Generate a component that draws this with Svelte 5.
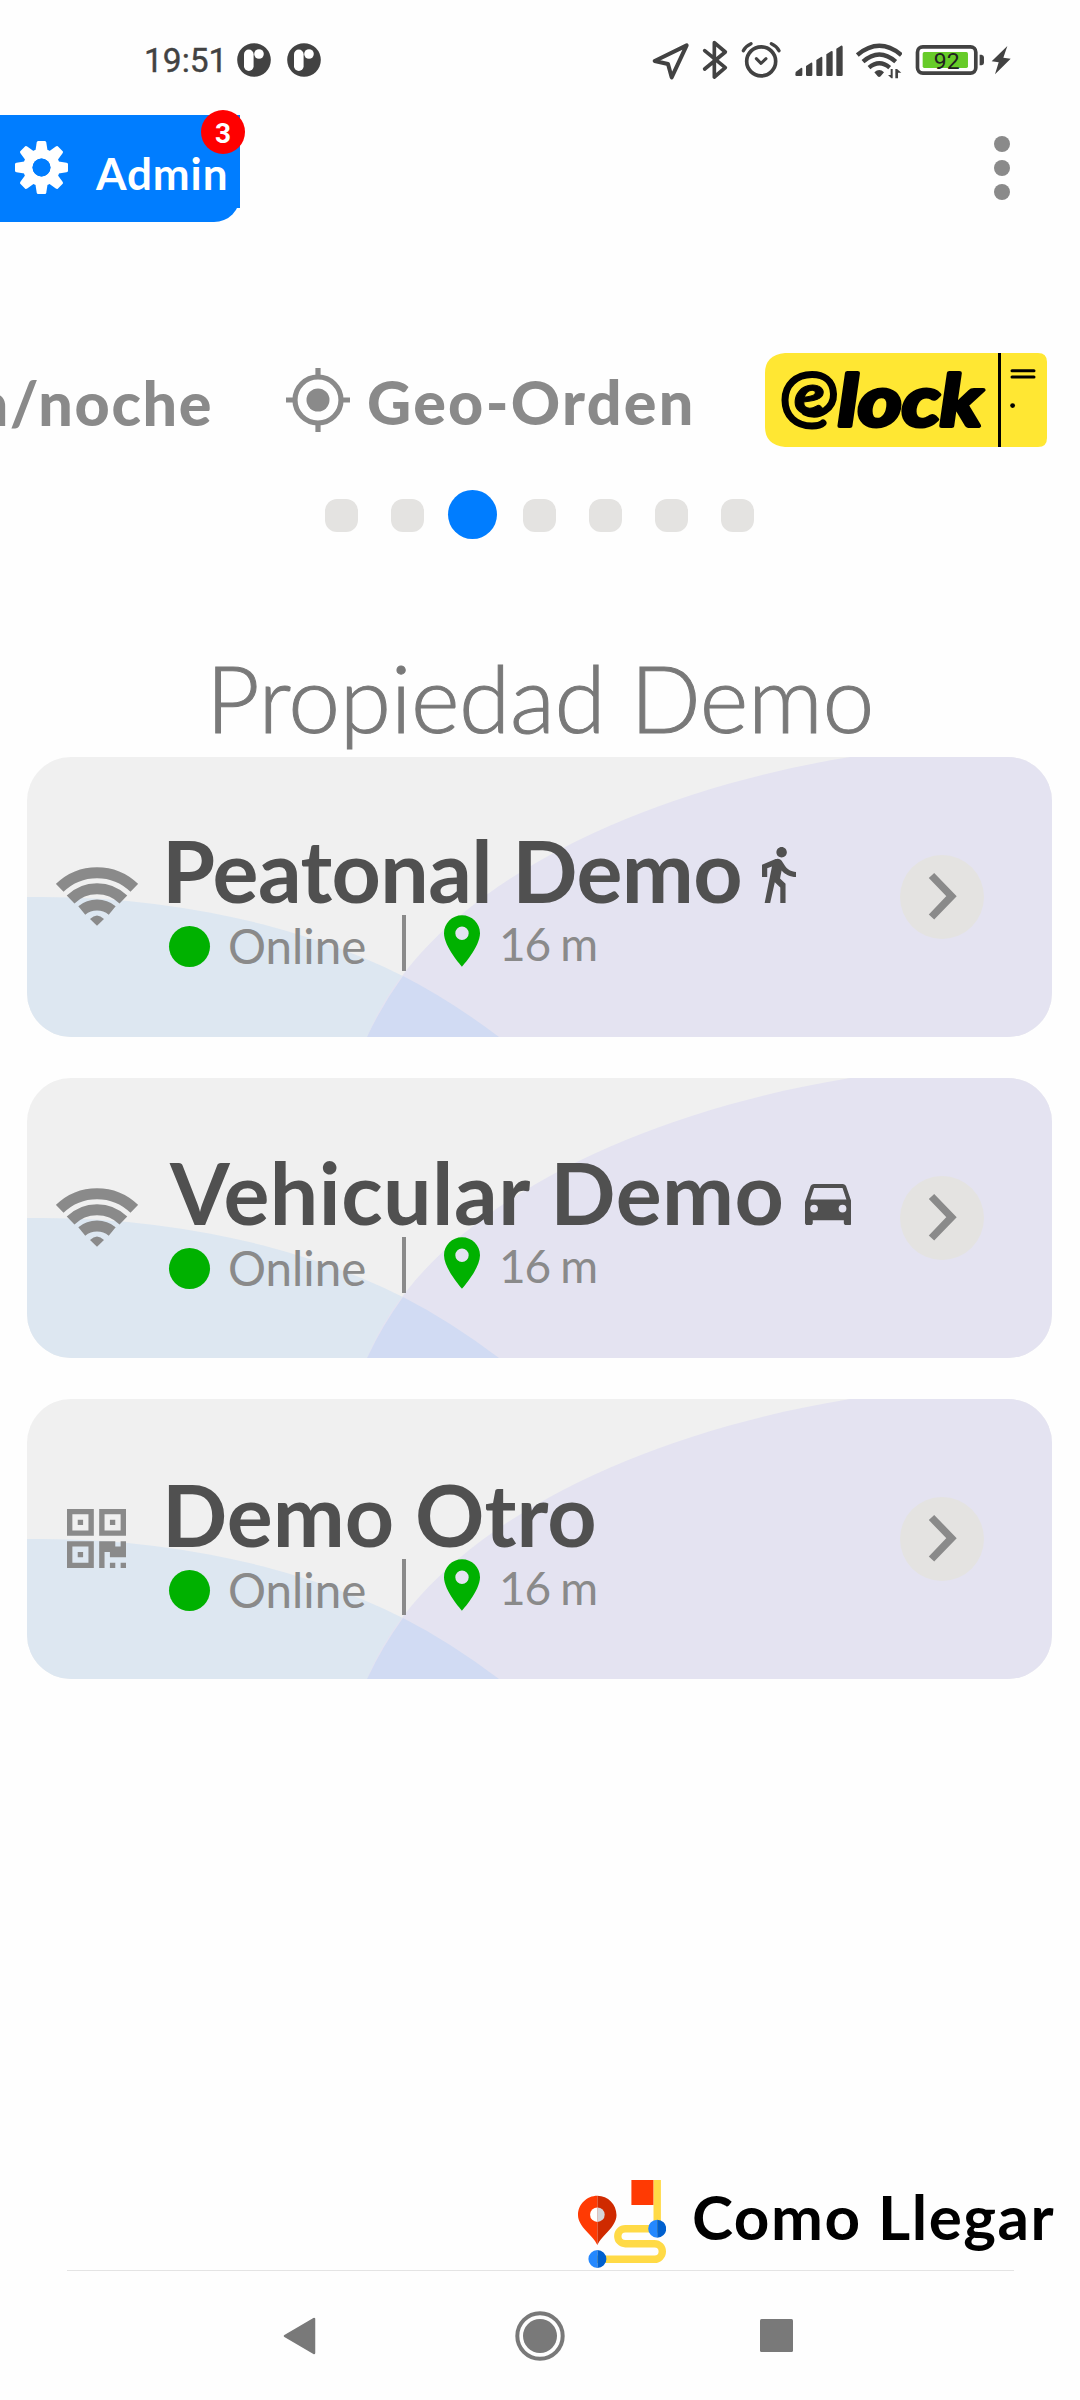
<script>
  let badge = 3
  let active = 2
  let pages = [0, 1, 2, 3, 4, 5, 6]

  let accesses = [
    {name: "Peatonal Demo", link: "wifi", kind: "walk", state: "Online", distance: "16 m"},
    {name: "Vehicular Demo", link: "wifi", kind: "car", state: "Online", distance: "16 m"},
    {name: "Demo Otro", link: "qr", kind: "", state: "Online", distance: "16 m"}
  ]
</script>

<div class="screen">
  <!-- STATUS BAR -->
  <div class="status">
    <span class="clock">19:51</span>
    {#each [0, 1] as n}
    <svg class="app-ico" viewBox="0 0 34 34">
      <circle cx="17" cy="17" r="16.8" fill="#424242"/>
      <rect x="7" y="6.5" width="9.6" height="21.5" rx="4.8" fill="#fff"/>
      <circle cx="22" cy="11" r="4.8" fill="#fff"/>
    </svg>
    {/each}
    <div class="sys">
      <svg width="38" height="40" viewBox="156 60 114 120">
        <path d="M164 123L260 76L215 172L204 132Z" fill="none" stroke="#424242" stroke-width="12" stroke-linejoin="round"/>
      </svg>
      <svg width="26" height="40" viewBox="306 60 78 120">
        <path d="M314 92L376 143L343 171V68L376 96L314 147" fill="none" stroke="#424242" stroke-width="11" stroke-linejoin="round" stroke-linecap="round"/>
      </svg>
      <svg width="40.7" height="40" viewBox="424 60 122 120">
        <g fill="none" stroke="#424242" stroke-linecap="round">
          <circle cx="484.500" cy="124" r="43.500" stroke-width="11"/>
          <path d="M470 116L484 130L499 116" stroke-width="9" stroke-linejoin="round"/>
          <path d="M431 92Q438 78 454 71M538 92Q531 78 515 71" stroke-width="10"/>
        </g>
      </svg>
      <svg width="48" height="40" viewBox="582 60 144 120">
        <path d="M584 156L600 144Q604 142 604 147V164Q604 168 600 168H587Q583 168 583 164ZM615 138L630 128Q634 126 634 131V164Q634 168 630 168H619Q615 168 615 164ZM646 120L660 111Q664 109 664 114V164Q664 168 660 168H650Q646 168 646 164ZM676 103L690 94Q695 91 695 97V164Q695 168 691 168H680Q676 168 676 164ZM706 86L720 77Q725 75 725 81V164Q725 168 721 168H710Q706 168 706 164Z" fill="#424242"/>
      </svg>
      <svg width="46.7" height="40" viewBox="764 60 140 120">
        <g fill="none" stroke="#424242" stroke-width="13">
          <path d="M768 105Q834 50 900 105"/>
          <path d="M785 125Q834 82 883 125"/>
          <path d="M803 143Q834 117 865 143"/>
        </g>
        <path d="M819 157Q834 143 848 157L838 169Q833 173 829 169ZM868 147H874V175H870L860 165H868ZM882 175V147H887L900 158H890V175Z" fill="#424242"/>
      </svg>
      <svg class="battery" width="69.300" height="40" viewBox="946 60 208 120">
        <rect x="953.500" y="80.500" width="175" height="79" rx="16" fill="#fff" stroke="#424242" stroke-width="11"/>
        <rect x="969" y="96" width="136" height="48" rx="5" fill="#67cb29"/>
        <text x="1041" y="147" text-anchor="middle" font-size="69" fill="#222">92</text>
        <path d="M1140 104H1146Q1153 106 1153 112V128Q1153 134 1146 136H1140Z" fill="#424242"/>
      </svg>
      <svg width="20.700" height="40" viewBox="1174 60 62 120">
        <path d="M1223 78L1176 124L1197 127L1186 163L1233 116L1211 113Z" fill="#424242"/>
      </svg>
    </div>
  </div>

  <!-- TOP BAR -->
  <div class="topbar">
    <div class="admin">
      <svg class="gear" viewBox="-26.500 -26.500 53 53">
        <g fill="#fff">
          {#each [0, 45, 90, 135, 180, 225, 270, 315] as deg}
          <path d="M-6.500 -14L-4.800 -25Q-4.500 -26.500 -3.500 -26.500H3.500Q4.500 -26.500 4.800 -25L6.500 -14Z" transform="rotate({deg})"/>
          {/each}
        </g>
        <circle r="13.700" fill="none" stroke="#fff" stroke-width="9.500"/>
        <circle r="9" fill="#007dff"/>
      </svg>
      <span class="admin-label">Admin</span>
      <span class="badge">{badge}</span>
    </div>
    <svg class="kebab" viewBox="0 0 16 64">
      <circle cx="8" cy="8" r="8"/>
      <circle cx="8" cy="32" r="8"/>
      <circle cx="8" cy="56" r="8"/>
    </svg>
  </div>

  <!-- CAROUSEL -->
  <div class="carousel">
    <span class="slide night">n/noche</span>
    <svg class="target" viewBox="-32 -32 64 64">
      <circle r="23" fill="none" stroke="#8a8a8a" stroke-width="5.200"/>
      <circle r="11.500" fill="#8a8a8a"/>
      <path d="M0 -32V-24M0 24V32M-32 0H-24M24 0H32" stroke="#8a8a8a" stroke-width="5.200"/>
    </svg>
    <span class="slide geo">Geo-Orden</span>
    <svg class="elock" viewBox="0 0 282 94">
      <path d="M20 0H273Q282 0 282 9V85Q282 94 273 94H20Q0 92 0 74V20Q0 2 20 0Z" fill="#ffe733"/>
      <path d="M40 59C54 66 69 55 68.500 41C68 27 58 21.500 47 21.500C31 21.500 20 32 20 47C20 63 31 73 47 73Q55 73 58 70" fill="none" stroke="#000" stroke-width="7" stroke-linecap="round"/>
      <text x="29" y="61" font-size="56" textLength="31" lengthAdjust="spacingAndGlyphs">e</text>
      <text class="lock" x="73" y="73" font-size="70" textLength="144" lengthAdjust="spacingAndGlyphs">lock</text>
      <path d="M234.500 0V94" stroke="#000" stroke-width="3"/>
      <path d="M247 17.700H269M247 24H269" stroke="#000" stroke-width="3" stroke-linecap="round"/>
      <circle cx="247.600" cy="52.600" r="2.400"/>
    </svg>
  </div>
  <div class="dots">
    {#each pages as p}
    <span class="dot" class:active={p === active}></span>
    {/each}
  </div>

  <h1>Propiedad Demo</h1>

  <!-- ACCESS LIST -->
  <div class="list">
    {#each accesses as item, idx}
    <div class="card">
      <svg class="waves" viewBox="0 0 1025 280">
        <ellipse cx="15" cy="498" rx="576" ry="358" fill="#dde7f1"/>
        <path d="M340 280C395 142 590 38 823 0H1025V280Z" fill="#e4e3f1"/>
        <path d="M340 280Q355 248 376 219Q423 243 472 280Z" fill="#d1dbf3"/>
      </svg>
      <div class="link">
        {#if item.link === "wifi"}
        <svg width="82" height="59" viewBox="0 0 82 59">
          <g fill="none" stroke="#8a8a8a" stroke-width="11">
            <path d="M3.700 20.900A53.400 53.400 0 0 1 78.300 20.900"/>
            <path d="M14.600 32.500A37.700 37.700 0 0 1 67.400 32.500"/>
            <path d="M25.800 43.500A24 24 0 0 1 56.200 43.500"/>
          </g>
          <path d="M34 52Q41 45 48 52L41 58.700Z" fill="#8a8a8a"/>
        </svg>
        {:else}
        <svg class="qr" width="59" height="59" viewBox="0 0 11 11">
          <path fill-rule="evenodd" fill="#8a8a8a" d="M0 0h5v5H0zM1 1v3h3V1zM2 2h1v1H2zM6 0h5v5H6zM7 1v3h3V1zM8 2h1v1H8zM0 6h5v5H0zM1 7v3h3V7zM2 8h1v1H2zM6 6h3v1h1V6h1v3H8V8H7v3H6zM8 10h1v1H8zM10 10h1v1h-1z"/>
        </svg>
        {/if}
      </div>
      <div class="info" style:padding-top="{idx}px">
        <div class="name">
          <span class="name-text {item.kind || 'plain'}">{item.name}</span>
          {#if item.kind === "walk"}
          <svg width="34" height="56.300" viewBox="6 1.500 13 21.500">
            <path fill="#505050" d="M13.500 5.500c1.100 0 2-.9 2-2s-.9-2-2-2-2 .9-2 2 .9 2 2 2zM9.800 8.900L7 23h2.100l1.800-8 2.100 2v6h2v-7.500l-2.100-2 .6-3C14.800 12 16.800 13 19 13v-2c-1.900 0-3.500-1-4.300-2.400l-1-1.600c-.4-.6-1-1-1.700-1-.3 0-.5.1-.8.1L6 8.300V13h2V9.600l1.800-.7"/>
          </svg>
          {:else if item.kind === "car"}
          <svg width="46.600" height="41.400" viewBox="3 4 18 16">
            <path fill="#505050" fill-rule="evenodd" d="M18.920 5.010C18.720 4.420 18.160 4 17.500 4h-11c-.66 0-1.210.42-1.420 1.010L3 11v8c0 .55.45 1 1 1h1c.55 0 1-.45 1-1v-1h12v1c0 .55.45 1 1 1h1c.55 0 1-.45 1-1v-8l-2.080-5.990zM6.500 15a1.500 1.500 0 1 1 0-3 1.500 1.500 0 0 1 0 3zM17.500 15a1.500 1.500 0 1 1 0-3 1.500 1.500 0 0 1 0 3zM5 10l1.500-4.500h11L19 10z"/>
          </svg>
          {/if}
        </div>
        <div class="meta">
          <span class="online"></span>
          <span class="state">{item.state}</span>
          <span class="sep"></span>
          <svg class="pin" viewBox="5 2 14 20">
            <path fill="#00b100" fill-rule="evenodd" d="M12 2C8.130 2 5 5.130 5 9c0 5.250 7 13 7 13s7-7.750 7-13c0-3.870-3.130-7-7-7zm0 9.600a2.600 2.600 0 1 1 0-5.200 2.600 2.600 0 0 1 0 5.200z"/>
          </svg>
          <span class="distance">{item.distance}</span>
        </div>
      </div>
      <svg class="go" viewBox="0 0 84 84">
        <circle cx="42" cy="42" r="42" fill="#e4e3e1"/>
        <path d="M31.500 20.500L51.500 41.200L31.500 62" fill="none" stroke="#8a8a8a" stroke-width="7.500"/>
      </svg>
    </div>
    {/each}
  </div>

  <!-- DIRECTIONS -->
  <div class="route">
    <svg class="route-ico" viewBox="0 0 88 88">
      <path d="M79.200 0V48.700H47.300A7.500 7.500 0 0 0 47.300 63.700H76.500A7.800 7.800 0 0 1 76.500 79.300H19" fill="none" stroke="#ffda46" stroke-width="7.400"/>
      <path d="M53.400 0H75.400V25H53.400Z" fill="#ff3a03"/>
      <path d="M19.400 15.700C8.700 15.700 0 24.300 0 35C0 47 15 55 19.400 65Z" fill="#ff3a03"/>
      <path d="M19.400 15.700C30 15.700 38.500 24.300 38.500 35C38.500 47 24 55 19.400 65Z" fill="#cf2a00"/>
      <path d="M19.400 27.400A7.300 7.300 0 0 0 19.400 42Z" fill="#fff"/>
      <path d="M19.400 27.400A7.300 7.300 0 0 1 19.400 42Z" fill="#d6d6da"/>
      <path d="M79.200 39.700A9 9 0 0 0 79.200 57.700ZM19.400 70A9 9 0 0 0 19.400 88Z" fill="#2488ff"/>
      <path d="M79.200 39.700A9 9 0 0 1 79.200 57.700ZM19.400 70A9 9 0 0 1 19.400 88Z" fill="#0060cf"/>
    </svg>
    <span class="route-label">Como Llegar</span>
  </div>
  <hr>

  <!-- SYSTEM NAVIGATION -->
  <div class="nav">
    <svg width="38" height="38" viewBox="0 0 38 38">
      <path d="M3 19L32 2V36Z" fill="#797979" stroke="#797979" stroke-width="2.500" stroke-linejoin="round"/>
    </svg>
    <svg width="50" height="50" viewBox="0 0 50 50">
      <circle cx="25" cy="25" r="22.700" fill="none" stroke="#797979" stroke-width="4"/>
      <circle cx="25" cy="25" r="17" fill="#797979"/>
    </svg>
    <svg width="33" height="33" viewBox="0 0 33 33">
      <rect width="33" height="33" rx="1.500" fill="#797979"/>
    </svg>
  </div>
</div>

<style>
:global(body) {
  background: #fefefe;
}

.screen {
  width: 1080px;
  height: 2400px;
  overflow: hidden;
  background: #fefefe;
  font-family: Lato, "Open Sans", sans-serif;
  display: flex;
  flex-direction: column;
}

svg {
  display: block;
  flex: none;
}

span {
  white-space: nowrap;
}

.status {
  height: 80px;
  padding: 40px 68px 0 144px;
  box-sizing: border-box;
  display: flex;
  font-family: Roboto, sans-serif;
}

.clock {
  width: 93px;
  font-size: 33.500px;
  line-height: 42px;
  color: #424242;
  -webkit-text-stroke: 0.4px #424242;
}

.app-ico {
  width: 34px;
  height: 34px;
  margin: 3px 16px 0 0;
}

.sys {
  flex: 1;
  display: flex;
  justify-content: flex-end;
}

.sys svg {
  margin-left: 12.800px;
}

.sys svg:last-child {
  margin-left: 7px;
}

.topbar {
  height: 273px;
  padding: 35px 70px 0 0;
  box-sizing: border-box;
  display: flex;
  justify-content: space-between;
}

.admin {
  position: relative;
  width: 240px;
  height: 107px;
  box-sizing: border-box;
  padding-left: 15px;
  display: flex;
  background: linear-gradient(#007dff, #007dff) 0 0 / 240px 93px no-repeat;
}

.admin::before {
  content: "";
  position: absolute;
  inset: 0;
  background: #007dff;
  border-bottom-right-radius: 26px;
}

.gear {
  position: relative;
  width: 53px;
  height: 53px;
  margin-top: 26px;
}

.admin-label {
  position: relative;
  margin-left: 28px;
  margin-top: 32px;
  font-size: 44px;
  line-height: 52px;
  letter-spacing: 0.9px;
  font-weight: 700;
  color: #fff;
}

.badge {
  position: absolute;
  left: 201px;
  top: -5px;
  width: 44px;
  height: 44px;
  border-radius: 50%;
  background: #ff0000;
  color: #fff;
  font: 700 28px/47px Roboto, sans-serif;
  text-align: center;
}

.kebab {
  width: 16px;
  height: 64px;
  margin-top: 21px;
  fill: #8a8a8a;
}

.carousel {
  height: 94px;
  display: flex;
  align-items: flex-start;
}

.slide {
  font-size: 61px;
  line-height: 97px;
  font-weight: 900;
  color: #8a8a8a;
}

.night {
  width: 213px;
  margin-right: 73px;
  line-height: 99px;
  letter-spacing: 1.600px;
  display: flex;
  justify-content: flex-end;
  overflow: hidden;
}

.target {
  width: 64px;
  height: 64px;
  margin: 15px 17px 0 0;
}

.geo {
  width: 398px;
  letter-spacing: 2.300px;
}

.elock {
  width: 282px;
  height: 94px;
}

.elock text {
  font-weight: 900;
  font-style: italic;
  stroke: #000;
  stroke-width: 1px;
  stroke-linejoin: round;
}

.elock .lock {
  font-weight: 700;
  stroke-width: 4px;
}

.dots {
  height: 190px;
  padding: 52px 0 0 325px;
  box-sizing: border-box;
  display: flex;
  gap: 33px;
}

.dot {
  width: 33px;
  height: 33px;
  border-radius: 12px;
  background: #e4e3e1;
}

.dot.active {
  width: 49px;
  height: 49px;
  margin: -9px -7px 0 -9px;
  border-radius: 50%;
  background: #007dff;
}

h1 {
  margin: 0;
  height: 120px;
  font-size: 93px;
  line-height: 120px;
  letter-spacing: -0.4px;
  font-weight: 300;
  text-align: center;
  color: #797979;
  -webkit-text-stroke: 1px #797979;
}

.list {
  padding: 0 28px 0 27px;
  display: flex;
  flex-direction: column;
  gap: 41px;
}

.card {
  position: relative;
  height: 280px;
  border-radius: 44px;
  overflow: hidden;
  background: #f0f0f0;
  display: flex;
}

.waves {
  position: absolute;
  inset: 0;
  width: 1025px;
  height: 280px;
}

.link {
  position: relative;
  width: 140px;
  padding-top: 110px;
  display: flex;
  justify-content: center;
}

.qr {
  margin-right: 2px;
}

.info {
  position: relative;
  flex: 1;
}

.name {
  height: 146px;
  display: flex;
  align-items: flex-end;
  gap: 20px;
}

.name-text {
  height: 85px;
  margin-left: -5px;
  font-size: 86px;
  line-height: 104px;
  font-weight: 700;
  color: #505050;
}

.name-text.walk {
  letter-spacing: -0.6px;
}

.name-text.car {
  margin-left: 3px;
  letter-spacing: 0.5px;
}

.meta {
  padding: 12px 0 0 2px;
  display: flex;
}

.online {
  width: 41px;
  height: 41px;
  margin-top: 11px;
  border-radius: 50%;
  background: #00b100;
}

.state {
  width: 156px;
  margin-left: 18px;
  padding-top: 1px;
  font-size: 47.500px;
  line-height: 60px;
  color: #8a8a8a;
}

.sep {
  width: 4px;
  height: 56px;
  margin: 0 38px 0 18px;
  background: #8a8a8a;
}

.pin {
  width: 36px;
  height: 52px;
}

.distance {
  margin: -1px 0 0 19px;
  font-size: 46px;
  line-height: 60px;
  letter-spacing: -1.300px;
  color: #8a8a8a;
}

.go {
  position: relative;
  width: 84px;
  height: 84px;
  margin: 98px 68px 0 0;
}

.route {
  margin-top: auto;
  height: 90px;
  padding-right: 25px;
  display: flex;
  justify-content: flex-end;
}

.route-ico {
  width: 88px;
  height: 88px;
}

.route-label {
  width: 363px;
  height: 75px;
  margin-left: 26px;
  overflow: hidden;
  font-size: 62px;
  line-height: 73px;
  letter-spacing: 1.500px;
  font-weight: 700;
  color: #000;
}

hr {
  width: 947px;
  height: 1px;
  margin: 0 0 0 67px;
  border: 0;
  background: #e4e4e4;
}

.nav {
  height: 129px;
  padding: 0 287px 0 282px;
  display: flex;
  align-items: center;
  justify-content: space-between;
}
</style>
